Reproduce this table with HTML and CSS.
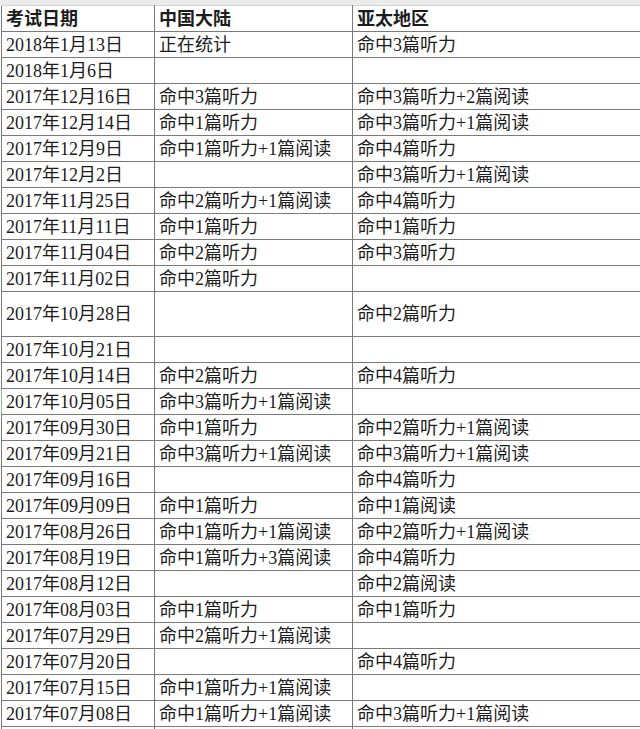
FILE: index.html
```html
<!DOCTYPE html>
<html lang="zh-CN">
<head>
<meta charset="utf-8">
<title>考试日期</title>
<link rel="stylesheet" href="styles.css">
</head>
<body>
<div class="topband"></div>
<table class="sheet">
<colgroup><col class="c1"><col class="c2"><col class="c3"></colgroup>
<thead>
<tr><th>考试日期</th><th>中国大陆</th><th>亚太地区</th></tr>
</thead>
<tbody>
<tr><td>2018年1月13日</td><td>正在统计</td><td>命中3篇听力</td></tr>
<tr><td>2018年1月6日</td><td></td><td></td></tr>
<tr><td>2017年12月16日</td><td>命中3篇听力</td><td>命中3篇听力+2篇阅读</td></tr>
<tr><td>2017年12月14日</td><td>命中1篇听力</td><td>命中3篇听力+1篇阅读</td></tr>
<tr><td>2017年12月9日</td><td>命中1篇听力+1篇阅读</td><td>命中4篇听力</td></tr>
<tr><td>2017年12月2日</td><td></td><td>命中3篇听力+1篇阅读</td></tr>
<tr><td>2017年11月25日</td><td>命中2篇听力+1篇阅读</td><td>命中4篇听力</td></tr>
<tr><td>2017年11月11日</td><td>命中1篇听力</td><td>命中1篇听力</td></tr>
<tr><td>2017年11月04日</td><td>命中2篇听力</td><td>命中3篇听力</td></tr>
<tr><td>2017年11月02日</td><td>命中2篇听力</td><td></td></tr>
<tr class="tall"><td>2017年10月28日</td><td></td><td>命中2篇听力</td></tr>
<tr><td>2017年10月21日</td><td></td><td></td></tr>
<tr><td>2017年10月14日</td><td>命中2篇听力</td><td>命中4篇听力</td></tr>
<tr><td class="selected">2017年10月05日</td><td>命中3篇听力+1篇阅读</td><td></td></tr>
<tr><td>2017年09月30日</td><td>命中1篇听力</td><td>命中2篇听力+1篇阅读</td></tr>
<tr><td>2017年09月21日</td><td>命中3篇听力+1篇阅读</td><td>命中3篇听力+1篇阅读</td></tr>
<tr><td>2017年09月16日</td><td></td><td>命中4篇听力</td></tr>
<tr><td>2017年09月09日</td><td>命中1篇听力</td><td>命中1篇阅读</td></tr>
<tr><td>2017年08月26日</td><td>命中1篇听力+1篇阅读</td><td>命中2篇听力+1篇阅读</td></tr>
<tr><td>2017年08月19日</td><td>命中1篇听力+3篇阅读</td><td>命中4篇听力</td></tr>
<tr><td>2017年08月12日</td><td></td><td>命中2篇阅读</td></tr>
<tr><td>2017年08月03日</td><td>命中1篇听力</td><td>命中1篇听力</td></tr>
<tr><td>2017年07月29日</td><td>命中2篇听力+1篇阅读</td><td></td></tr>
<tr><td>2017年07月20日</td><td></td><td>命中4篇听力</td></tr>
<tr><td>2017年07月15日</td><td>命中1篇听力+1篇阅读</td><td></td></tr>
<tr><td>2017年07月08日</td><td>命中1篇听力+1篇阅读</td><td>命中3篇听力+1篇阅读</td></tr>
<tr class="stub"><td></td><td></td><td></td></tr>
</tbody>
</table>
</body>
</html>
```

FILE: styles.css
```css
html, body {
  margin: 0;
  padding: 0;
  background: #ffffff;
}

body {
  width: 640px;
  height: 729px;
  overflow: hidden;
  font-family: "Liberation Serif", "Noto Sans CJK SC", serif;
  color: #1c1c1c;
}

.topband {
  height: 5px;
  background: #ebebeb;
}

.sheet {
  border-collapse: collapse;
  table-layout: fixed;
  width: 639px;
  margin-left: 1px;
  font-size: 18px;
}

.c1 { width: 153px; }
.c2 { width: 198px; }
.c3 { width: 288px; }

.sheet th,
.sheet td {
  height: 25px;
  padding: 0 0 0 4px;
  border: 1px solid #7a7a7a;
  text-align: left;
  vertical-align: middle;
  white-space: nowrap;
  overflow: hidden;
  line-height: 24px;
}

.sheet thead th {
  border-top-color: #d2d2d2;
  font-weight: bold;
}

.sheet .tall td {
  height: 44px;
}

.sheet td.selected {
  border-left-color: #8cc08c;
}

.sheet .stub td {
  height: 10px;
  border-bottom: none;
}
```
